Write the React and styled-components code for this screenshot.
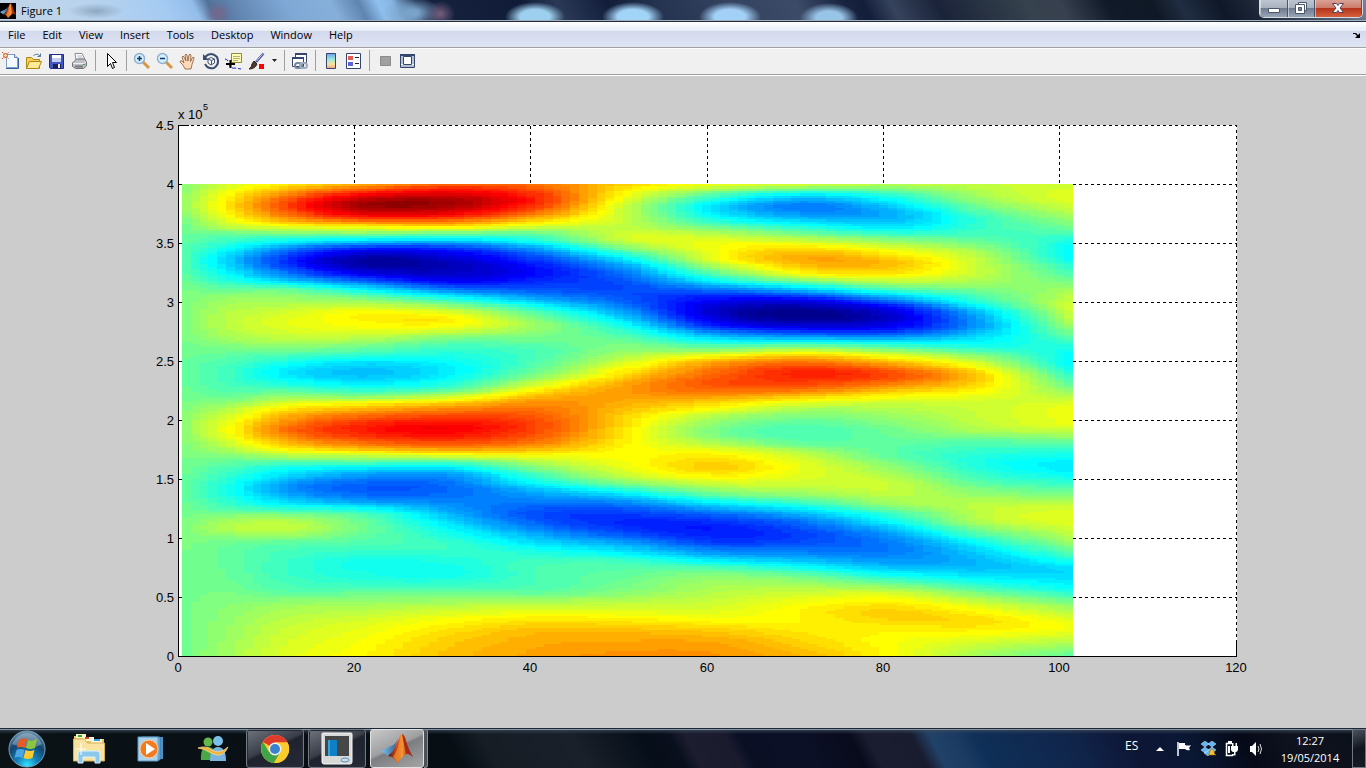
import React from "react";
import styled, { createGlobalStyle } from "styled-components";

const GlobalStyle = createGlobalStyle`
  * { box-sizing: border-box; }
  html, body, #root { height: 100%; }
  body {
    margin: 0;
    background: #ccc;
    font-family: "Open Sans", "Noto Sans", sans-serif;
    font-size: 11px;
    line-height: 16px;
    color: #000;
    overflow: hidden;
  }
  button { font: inherit; color: inherit; border: 0; padding: 0; background: none; }
  svg { display: block; }
`;

const Desktop = styled.div`
  height: 100vh;
  display: flex;
  flex-direction: column;
`;

/* ---------- title bar ---------- */

const TitleBar = styled.header`
  flex: none;
  height: 22px;
  display: flex;
  align-items: flex-start;
  border-bottom: 1px solid #232c3e;
  box-shadow: inset 0 -1px 0 #a3aebd;
  background:
    radial-gradient(ellipse 30px 15px at 535px 17px, #9cd0ee 50%, rgba(90, 140, 190, 0) 100%),
    radial-gradient(ellipse 31px 15px at 633px 17px, #a2d4f8 50%, rgba(90, 140, 190, 0) 100%),
    radial-gradient(ellipse 31px 15px at 730px 17px, #a2d0f6 50%, rgba(90, 140, 190, 0) 100%),
    radial-gradient(ellipse 29px 15px at 829px 18px, #98c4e8 45%, rgba(90, 140, 190, 0) 100%),
    radial-gradient(ellipse 15px 13px at 440px 14px, #6d5a78 10%, rgba(80, 70, 100, 0) 100%),
    radial-gradient(ellipse 30px 16px at 412px 13px, #7aa3c9 20%, rgba(90, 130, 170, 0) 100%),
    radial-gradient(ellipse 14px 12px at 218px 13px, #75688c 10%, rgba(110, 110, 150, 0) 100%),
    radial-gradient(ellipse 28px 8px at 96px 11px, #8ea8c2 0%, rgba(150, 180, 210, 0) 100%),
    linear-gradient(62deg, #c2d4e6 0, #b9d3ee 84px, #a5cbf2 150px, #94bdea 178px, #50719a 192px,
      #6286b0 215px, #7fa8d6 260px, #86afda 300px, #5f84b0 325px, #8fc0ee 342px, #88b6e4 355px, #16223f 376px,
      #101b37 470px, #2a3956 500px, #121d3a 545px, #253450 590px, #33435f 650px, #3c4c68 710px,
      #17233f 755px, #131e3a 770px, #36435c 795px, #1a2339 835px, #36424d 915px, #37404f 945px,
      #111a29 985px, #0f1825 1025px, #202d41 1050px, #0f1828 1085px, #1a2435 1110px, #57667a 1190px,
      #8594a8 1230px);
`;

const TitleLabel = styled.h1`
  flex: 1;
  display: flex;
  align-items: center;
  gap: 5px;
  height: 21px;
  margin: 0;
  font-size: 11px;
  font-weight: 400;
`;

const AppBadge = styled.span`
  width: 16px;
  height: 16px;
  background: #000;
`;

const Caption = styled.div`
  display: flex;
  height: 18px;
  margin-right: 3px;
  border: 1px solid #d5dbe3;
  border-top: 0;
  border-radius: 0 0 5px 5px;
  overflow: hidden;
`;

const CaptionButton = styled.button`
  width: ${(p) => p.$width}px;
  display: flex;
  justify-content: center;
  border-right: 1px solid #49566a;
  box-shadow: inset 1px 0 0 #ffffff77;
  background: ${(p) =>
    p.$close
      ? "linear-gradient(#d9a296 0, #cc7a68 8px, #b5321a 8px, #d5603c 17px)"
      : "linear-gradient(#bcc5cf 0, #a7b1be 8px, #6c7a8d 8px, #97a5b6 17px)"};
`;

/* ---------- menu bar ---------- */

const MenuBar = styled.nav`
  flex: none;
  height: 26px;
  display: flex;
  align-items: center;
  gap: 1px;
  border-bottom: 1px solid #a0a0a5;
  background: linear-gradient(#fff 0, #e6edf6 9px, #d3d9ec 9px, #dfe4f5 25px);
`;

const MenuItem = styled.button`
  padding: 0 8px;
  height: 20px;
`;

const DockButton = styled.button`
  margin: 0 5px 0 auto;
  width: 8px;
`;

/* ---------- toolbar ---------- */

const Toolbar = styled.div`
  flex: none;
  height: 28px;
  display: flex;
  align-items: center;
  padding-bottom: 3px;
  border-top: 1px solid #fff;
  border-bottom: 1px solid #fff;
  background: #f0f0f0;
  box-shadow: inset 0 -1px 0 #a0a0a0;
`;

const ToolButton = styled.button`
  width: ${(p) => (p.$narrow ? 12 : 23)}px;
  height: 22px;
  padding-right: 1px;
  display: flex;
  align-items: center;
  justify-content: center;
`;

const Separator = styled.span`
  width: 1px;
  height: 21px;
  margin: 0 4px 0 3px;
  background: #a0a0a0;
`;

/* ---------- figure ---------- */

const Figure = styled.main`
  flex: 1;
  min-height: 0;
  background: #ccc;
`;

const Plot = styled.svg`
  width: 100%;
  height: 100%;
  font: 13px "Liberation Sans", Arial, sans-serif;
`;

/* ---------- taskbar ---------- */

const Taskbar = styled.footer`
  flex: none;
  height: 40px;
  display: flex;
  align-items: stretch;
  border-top: 1px solid #1c2836;
  color: #fff;
  background:
    linear-gradient(#8795a3 0, #8795a3 1px, rgba(60, 75, 92, 0.7) 1px, rgba(30, 40, 60, 0) 5px),
    linear-gradient(62deg, #0a1216 0, #070f15 410px, #161d25 440px, #1a2029 520px, #060e19 580px,
      #090f1c 606px, #1c1d2f 620px, #1a1b2d 655px, #0a0f24 668px, #0c1027 720px, #080b1b 765px,
      #1a1d30 780px, #191c2e 820px, #214268 836px, #1b3a62 860px, #0f3058 875px, #10244a 960px,
      #0e1636 1010px, #0a1733 1060px, #060a18 1110px, #10131f 1160px, #0b1019 1210px);
`;

const StartButton = styled.button`
  width: 54px;
  display: flex;
  align-items: center;
  justify-content: center;
`;

const TaskList = styled.div`
  flex: 1;
  display: flex;
  gap: 4px;
  padding-left: 6px;
`;

const TaskButton = styled.button`
  width: ${(p) => (p.$active ? 54 : 58)}px;
  display: flex;
  align-items: center;
  justify-content: center;
  border-radius: 3px;
  ${(p) =>
    p.$open &&
    `
    border: 1px solid #747a84;
    box-shadow: inset 0 0 0 1px #262b36;
    background: linear-gradient(155deg, #6f737c 0, #3a3e49 45%, #1f232e 50%, #262a36 100%);
  `}
  ${(p) =>
    p.$active &&
    `
    border: 1px solid #e2e2e2;
    box-shadow: none;
    background: linear-gradient(155deg, #c9c9c9 0, #9d9fa1 45%, #7b7d80 50%, #a5a5a6 100%);
  `}
`;

const StackEdge = styled.span`
  width: 4px;
  margin-left: -4px;
  border: 1px solid #888c92;
  border-left: 0;
  border-radius: 0 3px 3px 0;
  background: #4d5158;
`;

const Tray = styled.div`
  display: flex;
  align-items: center;
`;

const Language = styled.span`
  width: 23px;
  height: 22px;
  font-size: 12px;
`;

const TrayButton = styled.button`
  width: 24px;
  height: 24px;
  display: flex;
  align-items: center;
  justify-content: center;
`;

const Clock = styled.time`
  width: 84px;
  text-align: center;
  line-height: 17px;
`;

const ShowDesktop = styled.button`
  align-self: stretch;
  width: 14px;
  border: 1px solid #6f7883;
  background: linear-gradient(160deg, #4b525e, #11151f 50%, #171b26);
`;

/* ---------- scalar field ---------- */

const Y_START = 184;
const Y_END = 656;
const COLS = 101;
const ROWS = 200;

// Vertical profiles: [column, [[y, level], ...]] with levels on the 0..64 colormap.
const PROFILES = [
  [1, [[184,33],[205,34],[225,31.5],[262,28.5],[290,31.5],[320,32.5],[350,31],[375,30],[395,31],[425,33.5],[450,32],[490,30],[530,32],[550,31.5],[600,31.3],[656,31.3]]],
  [6, [[184,37.5],[205,42],[227,36],[233,31],[247,25],[260,20.5],[277,24.5],[287,29],[297,33.5],[323,36],[340,34],[350,31],[373,27.5],[390,29],[400,32],[410,36],[430,40],[447,36],[457,32],[470,28],[490,25],[507,28],[517,33],[528,35.5],[538,32],[550,30],[580,30.5],[593,31.5],[613,33],[656,34.5]]],
  [11, [[184,40],[190,43.5],[205,50],[217,46],[223,42],[230,35],[235,30],[243,23],[250,17],[261,12.5],[273,17],[282,23],[290,31],[300,34],[323,38],[337,36],[347,32.5],[357,28],[373,23.5],[383,26],[393,31],[400,35],[408,40],[417,44],[430,47.5],[443,43],[450,39],[458,33],[467,26],[477,22],[488,18.5],[500,22],[510,28],[518,34],[527,36.5],[535,34],[543,30],[553,28.5],[570,28],[590,29.5],[597,31.5],[607,34],[627,36],[656,37.5]]],
  [21, [[184,44.5],[190,51],[197,58],[204,62],[213,58],[218,53],[223,46],[227,40],[232,34],[237,27],[242,20],[250,8.5],[261,2],[272,6],[280,13],[288,22],[295,29],[303,35],[317,40.7],[327,39.5],[337,36],[347,31],[355,27],[363,22],[373,20],[385,24],[390,27],[397,33],[403,40],[408,44],[417,50],[429,54.5],[443,49],[450,43],[455,37],[460,32],[467,24],[473,19],[488,13.5],[500,17],[508,24],[517,29.5],[527,31],[540,29.5],[553,27],[563,25],[577,26],[588,28.5],[597,32],[610,35.5],[627,38.5],[656,40.5]]],
  [31, [[184,49],[190,55],[203,61.7],[213,57],[220,50],[225,44],[229,38],[233,31],[240,22],[245,15],[254,7],[266,3.5],[278,6],[287,13],[295,22],[302,29],[310,36],[320,41],[330,37.5],[338,32],[347,28],[357,25.5],[370,23],[383,26],[389,29],[394,34],[400,40],[408,47],[417,52],[428,56.5],[443,51],[452,43],[458,35],[463,28],[470,21],[477,17],[490,14.5],[500,16],[513,19],[523,22],[533,25],[547,27.5],[560,26],[573,25],[583,27],[593,31],[603,34.5],[613,38],[623,40.5],[640,43],[656,44]]],
  [41, [[184,48.5],[200,53.5],[212,49],[220,43],[227,37],[233,31],[242,25],[247,20],[257,13],[272,8.5],[283,11],[293,15],[302,21],[308,26],[317,31],[325,33.5],[337,31.5],[353,28.5],[367,30],[377,33.5],[385,38],[393,42.5],[403,47],[427,51.5],[440,49],[448,45],[455,40],[463,35],[470,31],[476,28],[483,24.5],[490,20],[498,17],[507,14],[515,12.5],[523,14],[533,18],[543,22],[553,26],[567,28.5],[583,28.5],[592,30],[600,34],[610,38],[620,41.5],[633,44.5],[656,46]]],
  [51, [[184,43],[193,40],[210,36],[227,36],[237,37.5],[247,33],[253,28],[258,24],[270,17],[290,12.5],[300,13.5],[313,18],[323,23],[337,29],[350,33],[363,38],[373,42],[383,45.5],[390,46.5],[403,45],[420,42],[447,40.3],[462,39.5],[473,37.5],[482,33],[488,28],[495,22],[503,16.5],[513,12],[523,10.3],[533,12.5],[543,18],[553,23],[562,28],[573,30],[590,32],[600,35],[610,38],[620,41],[633,44.5],[656,47]]],
  [61, [[184,39.5],[188,36],[195,29],[208,22],[217,24.5],[225,29],[233,35],[247,39.5],[257,39],[267,34],[273,30],[282,23],[288,17],[297,9.5],[312,4.5],[323,8],[333,17],[343,26],[350,33],[357,41],[363,46],[373,49.5],[383,51],[390,49.5],[400,44],[408,40],[417,35],[432,31.5],[443,35],[453,40],[467,43],[477,40],[483,37],[492,32],[502,24],[508,19],[517,13],[529,9.5],[540,11],[550,16],[562,24],[570,30],[580,33.5],[593,35.5],[610,38],[620,40],[630,43],[643,45.5],[656,46.7]]],
  [71, [[184,38],[188,33],[195,23],[207,15.5],[215,18],[223,23],[232,30],[240,36],[247,41],[258,45.5],[270,42],[277,37],[283,29],[290,20],[297,11],[303,5],[315,0.3],[325,5],[333,13],[340,22],[347,32],[353,40],[360,47],[373,54],[383,52],[392,47],[398,42],[405,37],[413,33],[432,28.5],[443,30],[453,35.5],[468,38.5],[483,37],[495,33],[505,26],[512,21],[523,15],[536,12],[548,14.5],[560,20],[568,25],[577,31],[590,36],[603,39.5],[612,40.7],[622,40.5],[633,41.5],[656,44.5]]],
  [81, [[184,36.5],[190,31],[198,25],[215,19],[227,22.5],[233,27],[242,34],[252,40],[263,44],[272,42],[280,37],[287,31],[293,24],[302,14],[308,8],[318,5],[327,8],[335,15],[340,21],[347,29],[355,38],[362,44],[375,51.5],[387,46],[395,41],[403,37],[417,33.5],[432,31],[453,29.5],[467,33],[487,36.5],[503,34],[513,28],[522,24],[533,18.5],[547,15.5],[562,18],[572,23],[580,28],[588,34],[597,39],[615,43],[628,41],[643,39.7],[656,40]]],
  [91, [[184,36.5],[197,34],[207,31],[220,27],[233,28],[243,31],[257,35.5],[270,36.5],[283,34],[293,30],[303,26],[313,20],[325,18],[337,22],[347,26],[355,32],[363,37],[377,43],[395,39],[403,37],[417,36.5],[430,35],[440,30],[452,27],[462,25.5],[477,28],[490,32],[508,36],[520,35.5],[530,31],[540,26],[549,22],[564,19.5],[577,23],[587,28],[597,34],[607,38.5],[621,42],[635,39.5],[647,36],[656,34]]],
  [101, [[184,37],[197,38.5],[210,36],[227,31],[240,26],[252,23.5],[267,27],[280,31],[293,35],[307,37],[320,35],[330,32],[343,27],[360,23.5],[377,28],[385,31],[395,35],[410,39],[423,39],[433,35],[443,30],[452,26],[467,22.5],[480,26],[493,31],[503,36],[517,38.5],[533,36],[547,32],[557,27],[572,21.5],[587,24],[597,29],[610,35],[627,39.5],[640,36],[656,30]]],
];

// Cubic interpolation through [position, value] knots. The monotone form never
// overshoots; the smooth form rounds off peaks that fall between two knots.
function curve(points, smooth) {
  const n = points.length;
  const gap = [];
  const slope = [];
  for (let i = 0; i < n - 1; i++) {
    gap.push(points[i + 1][0] - points[i][0]);
    slope.push((points[i + 1][1] - points[i][1]) / gap[i]);
  }
  const tangent = points.map((_, i) => {
    if (i === 0) return slope[0];
    if (i === n - 1) return slope[n - 2];
    const a = slope[i - 1];
    const b = slope[i];
    if (smooth) return (a * gap[i] + b * gap[i - 1]) / (gap[i] + gap[i - 1]);
    return a * b <= 0 ? 0 : (2 * a * b) / (a + b);
  });
  return (x) => {
    let i = 0;
    while (i < n - 2 && x > points[i + 1][0]) i++;
    const h = gap[i];
    const t = (x - points[i][0]) / h;
    const t2 = t * t;
    const t3 = t2 * t;
    return (
      (2 * t3 - 3 * t2 + 1) * points[i][1] +
      (t3 - 2 * t2 + t) * h * tangent[i] +
      (3 * t2 - 2 * t3) * points[i + 1][1] +
      (t3 - t2) * h * tangent[i + 1]
    );
  };
}

const clamp = (v, lo, hi) => Math.min(hi, Math.max(lo, v));

function jet(level) {
  const v = (level + 1) / 16;
  const channel = (center) => Math.round(255 * clamp(1.5 - Math.abs(v - center), 0, 1));
  return `rgb(${channel(3)},${channel(2)},${channel(1)})`;
}

// One path per colormap level, each made of vertical runs of equal cells.
function buildLevels() {
  const columns = PROFILES.map(([x, points]) => [x, curve(points, false)]);
  const rows = Array.from({ length: ROWS }, (_, r) => {
    const y = Y_START + ((r + 0.5) * (Y_END - Y_START)) / ROWS;
    return curve(columns.map(([x, f]) => [x, f(y)]), true);
  });
  const paths = Array.from({ length: 64 }, () => "");
  for (let c = 0; c < COLS; c++) {
    let start = 0;
    let current = -1;
    for (let r = 0; r <= ROWS; r++) {
      const level = r < ROWS ? clamp(Math.floor(rows[r](c + 1) - 0.5), 0, 63) : -2;
      if (level !== current) {
        if (current >= 0) paths[current] += `M${c} ${start}h1V${r}h-1z`;
        start = r;
        current = level;
      }
    }
  }
  return paths;
}

const LEVELS = buildLevels();

const AXES = { left: 178, right: 1236, top: 49, bottom: 580 };
const xAt = (v) => Math.floor(AXES.left + (v * (AXES.right - AXES.left)) / 120);
const yAt = (v) => Math.round(AXES.bottom - (v * (AXES.bottom - AXES.top)) / 4.5);
const X_TICKS = [0, 20, 40, 60, 80, 100, 120];
const Y_TICKS = [0, 0.5, 1, 1.5, 2, 2.5, 3, 3.5, 4, 4.5];

function SurfacePlot() {
  const { left, right, top, bottom } = AXES;
  return (
    <Plot viewBox="0 0 1366 652" role="img" aria-label="Surface plot">
      <rect x={left} y={top} width={right - left + 1} height={bottom - top + 1} fill="#fff" />
      <g stroke="#000" shapeRendering="crispEdges" transform="translate(0.5 0.5)">
        <g strokeDasharray="3 3">
          <path d={`M${left + 12} ${top}H${right}V${bottom}`} fill="none" />
          {X_TICKS.slice(1, 6).map((v) => (
            <line key={v} x1={xAt(v)} x2={xAt(v)} y1={top} y2={yAt(4)} />
          ))}
          {Y_TICKS.slice(1, 9).map((v) => (
            <line key={v} x1={1072} x2={right} y1={yAt(v)} y2={yAt(v)} />
          ))}
        </g>
        <path d={`M${left + 10} ${top}H${left}V${bottom}H${right}v-14`} fill="none" />
        {Y_TICKS.map((v) => (
          <line key={v} x1={left} x2={left + 4} y1={yAt(v)} y2={yAt(v)} />
        ))}
      </g>
      <svg x="182" y="108" width="891" height="472" viewBox={`0 0 ${COLS} ${ROWS}`} preserveAspectRatio="none">
        {LEVELS.map((d, i) => d && <path key={i} d={d} fill={jet(i)} shapeRendering="crispEdges" />)}
      </svg>
      <g textAnchor="middle">
        {X_TICKS.map((v) => (
          <text key={v} x={xAt(v)} y={bottom + 16}>{v}</text>
        ))}
      </g>
      <g textAnchor="end">
        {Y_TICKS.map((v) => (
          <text key={v} x={left - 4} y={yAt(v) + 5}>{v}</text>
        ))}
      </g>
      <text x={left} y={43}>x 10</text>
      <text x={left + 25} y={34} fontSize="9">5</text>
    </Plot>
  );
}

/* ---------- icons ---------- */

const MatlabLogo = ({ size }) => (
  <svg width={size} height={size} viewBox="0 0 32 32">
    <defs>
      <linearGradient id="mlFace" x1="0" x2="1">
        <stop offset="0" stopColor="#5b1518" />
        <stop offset=".4" stopColor="#d9531e" />
        <stop offset=".55" stopColor="#f9a03a" />
        <stop offset=".75" stopColor="#c8401a" />
        <stop offset="1" stopColor="#8c1c10" />
      </linearGradient>
      <linearGradient id="mlWing" x1="0" x2="1">
        <stop offset="0" stopColor="#7fc4ea" />
        <stop offset="1" stopColor="#2a5b94" />
      </linearGradient>
    </defs>
    <path d="M0 18 10 13Q14 12 17 6L12 18 7 23Z" fill="url(#mlWing)" />
    <path d="M7 23 12 18Q16 10 19 3Q20 1 21 1Q23 1 25 8Q28 18 32 24Q28 20 25 21Q21 24 16 30Q14 24 7 23Z" fill="url(#mlFace)" />
    <path d="M20 2Q22 14 20 25L16 30Q14 25 12 24Q17 18 20 2Z" fill="#f08a2c" opacity=".8" />
    <path d="M21 1Q23 11 25 21Q28 20 32 24Q28 18 25 8Q23 1 21 1Z" fill="#a62a16" />
  </svg>
);

const icon = (children) => (
  <svg width="18" height="18" viewBox="0 0 18 18">{children}</svg>
);

const ICONS = {
  newFigure: icon(<>
    <path d="M4.500 2.500h8l3 3v10h-11z" fill="#f2f9ff" stroke="#7f9fc8" />
    <path d="M12.500 2v3.500h3" fill="#c9dcf2" stroke="#6387b5" />
    <path d="M4 16.500h12.500V6" fill="none" stroke="#345d99" />
    <circle cx="3.500" cy="3.500" r="2" fill="#fbd79a" stroke="#d4562a" />
    <path d="M0 0l1.500 1.500M5.500 5.500l1 1M0 7l1.500-1.500M5.500 1.500l1-1" stroke="#d4562a" />
  </>),
  open: icon(<>
    <path d="M1.500 16.500v-11h5l2 2h6v9z" fill="#f5cf57" stroke="#b28612" />
    <path d="M1.500 16.500l3-7h12l-3 7z" fill="#ffeb96" stroke="#b28612" />
    <path d="M8.500 3.500q4-3 7 1m0-3v3h-3" fill="none" stroke="#55779a" />
  </>),
  save: icon(<>
    <path d="M1.500 2.500h14v14h-13l-1-1z" fill="#4356c4" stroke="#22298a" />
    <path d="M4 3h9v7H4z" fill="#c4cef0" />
    <path d="M4 3h9v3H4z" fill="#fff" />
    <path d="M5 12h8v4H5z" fill="#1b2152" />
    <path d="M10 12h2v4h-2z" fill="#e9eefb" />
  </>),
  print: icon(<>
    <path d="M5 8 4 1.500h7l3 6" fill="#fff" stroke="#8b8b94" />
    <path d="M6 4h5M7 6h5" stroke="#a8b7cd" />
    <path d="M1.500 11l4-4h8l2 3v4l-3 2.500h-8l-3-2z" fill="#bfc0c6" stroke="#72727a" />
    <path d="M2 11.500h10l3-1.500" fill="none" stroke="#efefef" />
    <path d="M4 14.500h8" stroke="#77777c" strokeWidth="2" />
    <path d="M12 12.500h2" stroke="#35a23f" />
  </>),
  pointer: icon(<path d="M5.500 1.500v13l3-3 2 5 2-1-2-5h4z" fill="#fff" stroke="#000" />),
  zoomIn: icon(<>
    <path d="M10 10l6 6" stroke="#d99642" strokeWidth="3" />
    <circle cx="6.500" cy="6.500" r="5" fill="#d5f0fb" stroke="#8fb0d2" strokeWidth="1.500" />
    <path d="M4 6.500h5M6.500 4v5" stroke="#12386b" strokeWidth="1.500" />
  </>),
  zoomOut: icon(<>
    <path d="M10 10l6 6" stroke="#d99642" strokeWidth="3" />
    <circle cx="6.500" cy="6.500" r="5" fill="#d5f0fb" stroke="#8fb0d2" strokeWidth="1.500" />
    <path d="M4 6.500h5" stroke="#12386b" strokeWidth="1.500" />
  </>),
  pan: icon(<path d="M6 17l-2-4-3-3q0-2 2-1l2 2-2-6q1-2 2 0l2 4-1-6q1-2 2 0l1 6 1-6q1-2 2 0l-.500 6.500 2-4q2-1 1.500 1l-2 6-1 4.500z" fill="#fbd9b9" stroke="#8a5a38" strokeWidth=".8" />),
  rotate: icon(<>
    <path d="M3 5q6-6 12 0 3 7-3 11-6 1.500-9-4" fill="none" stroke="#3c4c70" strokeWidth="2" />
    <path d="M1 2v6h6z" fill="#3c4c70" />
    <path d="M6 7l3-1.500L12.500 7v4L9 13l-3-2zM6 7l3.500 1.500L12.500 7M9.500 8.500V13" fill="#f4f4f4" stroke="#4a5977" />
  </>),
  dataCursor: icon(<>
    <path d="M6.500 1.500h10v9h-10z" fill="#fcfab3" stroke="#8e8b3b" />
    <path d="M8 4.500h7M8 6.500h7M8 8.500h5" stroke="#b4b07a" />
    <path d="M0 7q3 0 4 5t6 4l6 1" fill="none" stroke="#1719e0" strokeDasharray="4 2" />
    <path d="M1 12h9M5.500 8v8" stroke="#000" strokeWidth="2" />
  </>),
  brush: icon(<>
    <path d="M15.500 1.500 8 10" stroke="#4b599a" strokeWidth="2.500" />
    <path d="M15 1.500 8.500 9" stroke="#b9c4ee" />
    <path d="M6 9l3 3q-2 5-8 5 3-2 3-5z" fill="#4c3a30" stroke="#2e241c" />
    <path d="M11 12h5v5h-5z" fill="#f00" />
  </>),
  caret: <svg width="5" height="3" viewBox="0 0 5 3"><path d="M0 0h5L2.500 3z" fill="#222" /></svg>,
  link: icon(<>
    <path d="M4.500 1.500h11v9h-11z" fill="#fff" stroke="#34466f" />
    <path d="M4 2h12" stroke="#34466f" strokeWidth="2" />
    <path d="M1.500 5.500h11v9h-11z" fill="#fff" stroke="#34466f" />
    <path d="M1 6h12" stroke="#34466f" strokeWidth="2" />
    <rect x="4" y="11" width="7" height="5" rx="2.500" fill="none" stroke="#77869c" strokeWidth="2" />
    <rect x="9" y="11" width="7" height="5" rx="2.500" fill="none" stroke="#9dacbf" strokeWidth="2" />
  </>),
  colorbar: icon(<>
    <defs>
      <linearGradient id="cbar" x1="0" x2="0" y1="0" y2="1">
        <stop offset="0" stopColor="#68a4ea" />
        <stop offset=".4" stopColor="#9de7dc" />
        <stop offset=".7" stopColor="#f8e69a" />
        <stop offset="1" stopColor="#f59d84" />
      </linearGradient>
    </defs>
    <path d="M4.500 1.500h9v15h-9z" fill="url(#cbar)" stroke="#34466f" />
  </>),
  legend: icon(<>
    <path d="M1.500 1.500h14v15h-14z" fill="#fff" stroke="#34466f" />
    <path d="M3 4h5v4H3z" fill="#e55b54" />
    <path d="M3 10h5v4H3z" fill="#5b63dd" />
    <path d="M10 5.500h4M10 11.500h4" stroke="#222" />
  </>),
  hideTools: icon(<path d="M4.500 4.500h10v9h-10z" fill="#a0a0a0" stroke="#8a8a8a" />),
  showTools: icon(<>
    <path d="M1.500 2.500h14v13h-14z" fill="#fff" stroke="#34466f" />
    <path d="M1 3h15" stroke="#34466f" strokeWidth="2" />
    <path d="M2 4h2v8H2zM13 4h2v8h-2zM2 13h13v2H2z" fill="#b4bfd0" />
    <path d="M4.500 4.500h8v8h-8z" fill="#fff" stroke="#34466f" />
  </>),
};

const TOOLS = [
  ["newFigure", "New Figure"], ["open", "Open File"], ["save", "Save Figure"], ["print", "Print Figure"], null,
  ["pointer", "Edit Plot"], null,
  ["zoomIn", "Zoom In"], ["zoomOut", "Zoom Out"], ["pan", "Pan"], ["rotate", "Rotate 3D"],
  ["dataCursor", "Data Cursor"], ["brush", "Brush Data"], ["caret", "Brush colors"], null,
  ["link", "Link Plot"], null,
  ["colorbar", "Insert Colorbar"], ["legend", "Insert Legend"], null,
  ["hideTools", "Hide Plot Tools"], ["showTools", "Show Plot Tools"],
];

const MENUS = ["File", "Edit", "View", "Insert", "Tools", "Desktop", "Window", "Help"];

const StartOrb = () => (
  <svg width="38" height="38" viewBox="0 0 38 38">
    <defs>
      <radialGradient id="orb" cx=".5" cy=".95" r=".95">
        <stop offset="0" stopColor="#35e6ff" />
        <stop offset=".3" stopColor="#1583bd" />
        <stop offset=".65" stopColor="#12456f" />
        <stop offset="1" stopColor="#6d95ae" />
      </radialGradient>
    </defs>
    <circle cx="19" cy="19" r="18" fill="url(#orb)" stroke="#7aa0b6" />
    <path d="M4 14Q10 3 19 3T34 14Q26 19 19 18T4 14Z" fill="#fff" opacity=".28" />
    <path d="M11 10q4-3 8-1l-2 9q-4-2-8 0z" fill="#ea5a25" />
    <path d="M20 10q4 2 9-1l-2 9q-5 2-9 0z" fill="#8cc63f" />
    <path d="M8.500 20q4-2 8 0l-2 8q-4-2-8 0z" fill="#4aa7e6" />
    <path d="M17.500 20q4 2 9 0l-2 8q-5 2-9 0z" fill="#fdc92f" />
  </svg>
);

const ExplorerIcon = () => (
  <svg width="34" height="32" viewBox="0 0 34 32">
    <path d="M2 3h11l2 3h17v22H2z" fill="#e8c766" />
    <path d="M4 1h10v4H4z" fill="#fff3c1" /><path d="M6 2h4v2H6z" fill="#2caa3e" />
    <path d="M11 4h11v4H11z" fill="#fff7d8" /><path d="M13 4h4v2h-4z" fill="#d9452c" />
    <path d="M19 6h11v4H19z" fill="#fff7d8" /><path d="M22 6h6v2h-6z" fill="#37a0e0" />
    <path d="M1.500 6h11l3 4h17v18h-31z" fill="#f8e3a0" stroke="#d3b058" />
    <path d="M6 30V21q0-3 3-3h16q3 0 3 3v9h-5v-6H11v6z" fill="#8cc9ea" stroke="#d8f2ff" />
    <path d="M9 10v12M4 16h10" stroke="#fff" strokeWidth="1" />
  </svg>
);

const MediaIcon = () => (
  <svg width="28" height="28" viewBox="0 0 28 28">
    <path d="M8 2h18v22H8z" fill="#4d93c8" /><path d="M5 2h18v23H5z" fill="#86bde2" stroke="#3e7cab" />
    <path d="M1 2h20v24H1z" fill="#a9d3ed" stroke="#5b97c0" />
    <circle cx="12" cy="14" r="9" fill="#f37a1f" stroke="#fbd0a0" />
    <path d="M9 8l9 6-9 6z" fill="#fff" />
  </svg>
);

const MessengerIcon = () => (
  <svg width="32" height="28" viewBox="0 0 32 28">
    <circle cx="11" cy="7" r="4.500" fill="#63b84b" /><path d="M4 25q-1-13 7-13t8 13z" fill="#4ba647" />
    <circle cx="21" cy="6" r="5" fill="#7cbfe8" /><path d="M13 26q0-14 8-14t8 14z" fill="#7ab4df" />
    <path d="M1 13q8-3 14 2 7 5 16-3-4 9-11 8-4-1-8-3-4-3-11-4z" fill="#f1b23a" stroke="#ffe29a" strokeWidth=".7" />
  </svg>
);

const ChromeIcon = () => (
  <svg width="30" height="30" viewBox="0 0 30 30">
    <circle cx="15" cy="15" r="14" fill="#fbcb2d" />
    <path d="M15 15 3 8A14 14 0 0 1 27.500 8.500H15z" fill="#df3a2c" />
    <path d="M3 8A14 14 0 0 0 14 29L20.500 18 15 15 9 18z" fill="#3fa648" />
    <path d="M15 8.500h12.500A14 14 0 0 1 14 29l6.500-11z" fill="#fbcb2d" />
    <circle cx="15" cy="15" r="6.500" fill="#f3f3f3" /><circle cx="15" cy="15" r="5" fill="#3b82cf" />
  </svg>
);

const MonitorIcon = () => (
  <svg width="32" height="34" viewBox="0 0 32 34">
    <path d="M2 1h28q1 0 1 1v28q0 2-2 2H3q-2 0-2-2V2q0-1 1-1z" fill="#d7d9d9" stroke="#f7f7f7" />
    <path d="M4 4h24v20H4z" fill="#454646" />
    <path d="M7 8h9v16H7z" fill="#0e80c8" /><path d="M7 8h2v16H7z" fill="#35a4df" />
    <ellipse cx="24" cy="28" rx="4" ry="2" fill="none" stroke="#4a93c8" />
  </svg>
);

const TRAY = [
  ["Show hidden icons", <svg width="8" height="4" viewBox="0 0 8 4"><path d="M0 4l4-4 4 4z" fill="#fff" /></svg>],
  ["Action Center", <svg width="16" height="16" viewBox="0 0 16 16"><path d="M2 1v14" stroke="#fff" strokeWidth="1.500" /><path d="M3 2h6v2q3 1 6 0l-2 3 1 2q-3 1-5-1H3z" fill="#fff" /></svg>],
  ["Dropbox", <svg width="17" height="16" viewBox="0 0 17 16"><path d="M5 0l4 3-4 3-4-3zM12 0l4 3-4 3-4-3zM5 6l4 3-4 3-4-3zM12 6l4 3-4 3-4-3zM8 10l3 2-3 3-4-3z" fill="#61b8f5" stroke="#c5e7ff" strokeWidth=".5" /><path d="M8 14q2-1 2-4 2-4 4 0 0 3 2 4z" fill="#f6bf34" stroke="#a56b08" strokeWidth=".5" /></svg>],
  ["Power", <svg width="16" height="16" viewBox="0 0 16 16"><path d="M8 2.500H2.500v12H9" fill="none" stroke="#fff" strokeWidth="1.500" /><path d="M4 0h4v2H4zM4 5h2v7H4zM7 5h7v4q-1 2-2 2H9q-1 0-2-2zM8 2h1.500v3H8zM11.500 2H13v3h-1.500zM10 11h1.500v3.500H8V13h2z" fill="#fff" /></svg>],
  ["Volume", <svg width="16" height="16" viewBox="0 0 16 16"><path d="M2 5h2l4-4v14l-4-4H2z" fill="#fff" /><path d="M10 5q2 3 0 6M12 3q3 5 0 10" fill="none" stroke="#ddd" /></svg>],
];

export default function App() {
  return (
    <Desktop>
      <GlobalStyle />
      <TitleBar>
        <TitleLabel>
          <AppBadge><MatlabLogo size={16} /></AppBadge>
          Figure 1
        </TitleLabel>
        <Caption>
          <CaptionButton $width={28} aria-label="Minimize">
            <svg width="14" height="16" viewBox="0 0 14 16"><path d="M1.500 8.500h11v4h-11z" fill="#fff" stroke="#4b566a" /></svg>
          </CaptionButton>
          <CaptionButton $width={27} aria-label="Restore">
            <svg width="14" height="16" viewBox="0 0 14 16">
              <path d="M4.500 2.500h8v8h-8z" fill="#fff" stroke="#4b566a" />
              <path d="M1.500 4.500h9v9h-9z" fill="#fff" stroke="#4b566a" />
              <path d="M4.500 7.500h3v3h-3z" fill="#7c899b" stroke="#4b566a" />
            </svg>
          </CaptionButton>
          <CaptionButton $width={47} $close aria-label="Close">
            <svg width="14" height="16" viewBox="0 0 14 16"><path d="M1.500 3.500h4L7 5.500l1.500-2h4L9 8l3.500 4.500h-4L7 10.500l-1.500 2h-4L5 8z" fill="#fff" stroke="#54445a" /></svg>
          </CaptionButton>
        </Caption>
      </TitleBar>
      <MenuBar>
        {MENUS.map((m) => <MenuItem key={m}>{m}</MenuItem>)}
        <DockButton aria-label="Dock figure">
          <svg width="8" height="6" viewBox="0 0 8 6"><path d="M0 1h3l2 2 2-2v5H2l2-2-2-2H0z" fill="#000" /></svg>
        </DockButton>
      </MenuBar>
      <Toolbar>
        {TOOLS.map((t, i) =>
          t ? (
            <ToolButton key={i} $narrow={t[0] === "caret"} aria-label={t[1]}>{ICONS[t[0]]}</ToolButton>
          ) : (
            <Separator key={i} />
          )
        )}
      </Toolbar>
      <Figure><SurfacePlot /></Figure>
      <Taskbar>
        <StartButton aria-label="Start"><StartOrb /></StartButton>
        <TaskList>
          <TaskButton aria-label="Windows Explorer"><ExplorerIcon /></TaskButton>
          <TaskButton aria-label="Media Player"><MediaIcon /></TaskButton>
          <TaskButton aria-label="Messenger"><MessengerIcon /></TaskButton>
          <TaskButton $open aria-label="Chrome"><ChromeIcon /></TaskButton>
          <TaskButton $open aria-label="Monitor"><MonitorIcon /></TaskButton>
          <TaskButton $open $active aria-label="MATLAB"><MatlabLogo size={32} /></TaskButton>
          <StackEdge />
        </TaskList>
        <Tray>
          <Language>ES</Language>
          {TRAY.map(([label, art]) => <TrayButton key={label} aria-label={label}>{art}</TrayButton>)}
          <Clock>12:27<br />19/05/2014</Clock>
          <ShowDesktop aria-label="Show desktop" />
        </Tray>
      </Taskbar>
    </Desktop>
  );
}
